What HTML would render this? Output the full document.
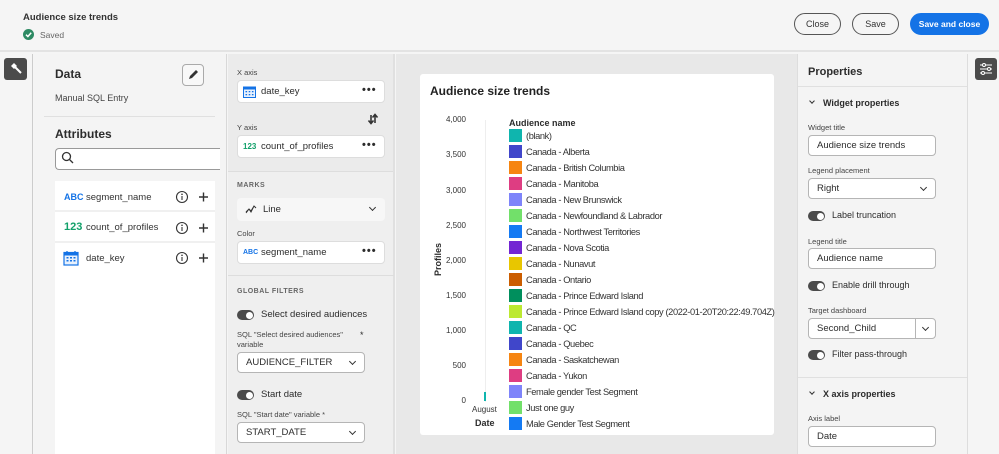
<!DOCTYPE html>
<html><head><meta charset="utf-8"><style>
*{box-sizing:border-box;margin:0;padding:0}
body{width:999px;height:454px;overflow:hidden;background:#f5f5f5;font-family:"Liberation Sans",sans-serif;color:#2c2c2c;position:relative;font-size:10px}
.a{position:absolute}
.inp{position:absolute;background:#fff;border:1px solid #b5b5b5;border-radius:4px;font-size:9.5px;padding-left:8px;display:flex;align-items:center}
.card{position:absolute;background:#fff;border:1px solid #ddd;border-radius:4px;display:flex;align-items:center;font-size:10px}
.lbl{position:absolute;font-size:7.5px;color:#444}
.tog{position:absolute;width:17px;height:10px;border-radius:5px;background:#4b4b4b}
.tog:after{content:"";position:absolute;right:1.5px;top:1.5px;width:7px;height:7px;border-radius:50%;background:#fff}
.chev{position:absolute;width:5px;height:5px;border-right:1.4px solid #333;border-bottom:1.4px solid #333;transform:rotate(45deg)}
.btn{position:absolute;height:22px;border-radius:11px;border:1.5px solid #555;font-size:9px;display:flex;align-items:center;justify-content:center;color:#333;background:#f5f5f5}
.leg{position:absolute;left:509px;font-size:9.3px;color:#333;white-space:nowrap;letter-spacing:-0.4px}
.leg i{display:inline-block;width:13px;height:13px;vertical-align:middle;margin-right:4px;margin-top:-2px}
.yt{position:absolute;right:533px;font-size:8px;color:#333;text-align:right}
.dots{position:absolute;font-weight:bold;font-size:11px;letter-spacing:1px}
</style></head><body>
<div class="a" style="left:0;top:0;width:999px;height:52px;background:#f5f5f5;border-bottom:2px solid #e3e3e3"></div>
<div class="a" style="left:23px;top:12px;font-size:9.5px;font-weight:bold;color:#333">Audience size trends</div>
<div class="a" style="left:23px;top:29px;width:11px;height:11px;border-radius:50%;background:#2d8a63"></div>
<svg class="a" style="left:23px;top:29px" width="11" height="11"><path d="M3 5.7L4.9 7.5L8.2 3.8" stroke="#fff" stroke-width="1.5" fill="none"/></svg>
<div class="a" style="left:40px;top:30px;font-size:8.5px;color:#666">Saved</div>
<div class="btn" style="left:794px;top:13px;width:47px">Close</div>
<div class="btn" style="left:852px;top:13px;width:47px">Save</div>
<div class="btn" style="left:910px;top:13px;width:79px;background:#1473e6;border-color:#1473e6;color:#fff;font-weight:bold;font-size:8.5px">Save and close</div>

<div class="a" style="left:0;top:54px;width:33px;height:400px;background:#f5f5f5;border-right:1px solid #ccc"></div>
<div class="a" style="left:4px;top:58px;width:23px;height:22px;background:#4b4b4b;border-radius:3px"></div>
<svg class="a" style="left:4px;top:58px" width="23" height="22"><path d="M7 8l3-3 3 3-3 3z" fill="#fff"/><path d="M11 9l6 6" stroke="#fff" stroke-width="2"/></svg>

<div class="a" style="left:34px;top:54px;width:193px;height:400px;background:#f4f4f4;border-right:1px solid #d8d8d8"></div>
<div class="a" style="left:55px;top:67px;font-size:12px;font-weight:bold">Data</div>
<div class="a" style="left:182px;top:64px;width:22px;height:22px;border:1px solid #aaa;border-radius:4px;background:#f8f8f8"></div>
<svg class="a" style="left:182px;top:64px" width="22" height="22"><path d="M7 15l1-3 6-6 2 2-6 6z" fill="#333"/></svg>
<div class="a" style="left:55px;top:93px;font-size:9px;color:#444">Manual SQL Entry</div>
<div class="a" style="left:44px;top:116px;width:171px;height:1px;background:#e0e0e0"></div>
<div class="a" style="left:55px;top:127px;font-size:12px;font-weight:bold">Attributes</div>
<div class="a" style="left:55px;top:148px;width:165px;height:22px;border:1px solid #999;border-right:none;border-radius:4px 0 0 4px;background:#fff"></div>
<svg class="a" style="left:61px;top:151px" width="14" height="14"><circle cx="5.5" cy="5.5" r="4" stroke="#333" stroke-width="1.3" fill="none"/><path d="M8.5 8.5l3.5 3.5" stroke="#333" stroke-width="1.3"/></svg>
<div class="a" style="left:55px;top:181px;width:160px;height:273px;background:#fff"></div>
<div class="a" style="left:55px;top:210px;width:160px;height:2px;background:#f0f0f0"></div>
<div class="a" style="left:55px;top:241px;width:160px;height:2px;background:#f0f0f0"></div>
<div class="a" style="left:64px;top:192px;font-size:9px;font-weight:bold;color:#1473e6">ABC</div>
<div class="a" style="left:86px;top:192px;font-size:9.5px;color:#333">segment_name</div>
<div class="a" style="left:64px;top:221px;font-size:11px;font-weight:bold;color:#12a06a">123</div>
<div class="a" style="left:86px;top:222px;font-size:9.5px;color:#333">count_of_profiles</div>
<svg class="a" style="left:63px;top:250px" width="16" height="16"><rect x="1" y="2.5" width="14" height="12.5" fill="#e8f1fd" stroke="#1473e6" stroke-width="1.2"/><rect x="1" y="2.5" width="14" height="3" fill="#1473e6"/><path d="M4 1v3M12 1v3" stroke="#1473e6" stroke-width="1.3"/><g fill="#1473e6"><rect x="3.5" y="7" width="2" height="1.5"/><rect x="7" y="7" width="2" height="1.5"/><rect x="10.5" y="7" width="2" height="1.5"/><rect x="3.5" y="10" width="2" height="1.5"/><rect x="7" y="10" width="2" height="1.5"/><rect x="10.5" y="10" width="2" height="1.5"/></g></svg>
<div class="a" style="left:86px;top:253px;font-size:9.5px;color:#333">date_key</div>
<svg class="a" style="left:174px;top:189px" width="40" height="80"><g stroke="#333" stroke-width="1.1" fill="none"><circle cx="8" cy="8" r="5.5"/><circle cx="8" cy="39" r="5.5"/><circle cx="8" cy="69" r="5.5"/><path d="M25 8h9M29.5 3.5v9M25 39h9M29.5 34.5v9M25 69h9M29.5 64.5v9" stroke-width="1.4"/><path d="M8 7v4M8 38v4M8 68v4"/></g><g fill="#333"><circle cx="8" cy="5.3" r=".8"/><circle cx="8" cy="36.3" r=".8"/><circle cx="8" cy="66.3" r=".8"/></g></svg>

<div class="a" style="left:228px;top:54px;width:167px;height:118px;background:#ebebeb;border-bottom:1px solid #ddd"></div>
<div class="a" style="left:228px;top:172px;width:167px;height:282px;background:#efefef"></div>
<div class="a" style="left:228px;top:54px;width:167px;height:400px;border-right:2px solid #e0e0e0"></div>
<div class="lbl" style="left:237px;top:68px">X axis</div>
<div class="card" style="left:237px;top:80px;width:148px;height:23px"></div>
<svg class="a" style="left:243px;top:85px" width="13" height="13"><rect x=".5" y="2" width="12" height="10.5" fill="#e8f1fd" stroke="#1473e6"/><rect x=".5" y="2" width="12" height="2.5" fill="#1473e6"/><g fill="#1473e6"><rect x="2.5" y="6" width="1.6" height="1.3"/><rect x="5.7" y="6" width="1.6" height="1.3"/><rect x="8.9" y="6" width="1.6" height="1.3"/><rect x="2.5" y="9" width="1.6" height="1.3"/><rect x="5.7" y="9" width="1.6" height="1.3"/><rect x="8.9" y="9" width="1.6" height="1.3"/></g></svg>
<div class="a" style="left:261px;top:86px;font-size:9.5px">date_key</div>
<div class="dots" style="left:362px;top:84px">•••</div>
<svg class="a" style="left:367px;top:112px" width="12" height="14"><path d="M4 3v8M1.5 8.5L4 11.5 6.5 8.5M8 11V3M5.5 5.5L8 2.5 10.5 5.5" stroke="#333" stroke-width="1.6" fill="none"/></svg>
<div class="lbl" style="left:237px;top:123px">Y axis</div>
<div class="card" style="left:237px;top:135px;width:148px;height:23px"></div>
<div class="a" style="left:243px;top:142px;font-size:8px;font-weight:bold;color:#12a06a">123</div>
<div class="a" style="left:261px;top:141px;font-size:9.5px">count_of_profiles</div>
<div class="dots" style="left:362px;top:139px">•••</div>
<div class="a" style="left:237px;top:182px;font-size:7px;font-weight:bold;color:#666;letter-spacing:.5px">MARKS</div>
<div class="a" style="left:237px;top:198px;width:148px;height:23px;background:#f7f7f7;border-radius:4px"></div>
<svg class="a" style="left:245px;top:204px" width="12" height="10"><path d="M1 9l3-4 2 2 3-5 2 2M1 8l3-3 2 3 3-6" stroke="#333" stroke-width="1" fill="none"/></svg>
<div class="a" style="left:263px;top:204px;font-size:9.5px">Line</div>
<div class="chev" style="left:370px;top:205px"></div>
<div class="lbl" style="left:237px;top:229px">Color</div>
<div class="card" style="left:237px;top:241px;width:148px;height:23px"></div>
<div class="a" style="left:243px;top:249px;font-size:7px;font-weight:bold;color:#1473e6">ABC</div>
<div class="a" style="left:261px;top:247px;font-size:9.5px">segment_name</div>
<div class="dots" style="left:362px;top:245px">•••</div>
<div class="a" style="left:228px;top:275px;width:166px;height:1px;background:#ddd"></div>
<div class="a" style="left:237px;top:288px;font-size:7px;font-weight:bold;color:#666;letter-spacing:.5px">GLOBAL FILTERS</div>
<div class="tog" style="left:237px;top:310px"></div>
<div class="a" style="left:261px;top:309px;font-size:9.5px">Select desired audiences</div>
<div class="lbl" style="left:237px;top:330px;line-height:10px">SQL "Select desired audiences"<br>variable</div>
<div class="a" style="left:360px;top:330px;font-size:9px">*</div>
<div class="inp" style="left:237px;top:352px;width:128px;height:21px">AUDIENCE_FILTER</div>
<div class="chev" style="left:350px;top:359px"></div>
<div class="tog" style="left:237px;top:390px"></div>
<div class="a" style="left:261px;top:389px;font-size:9.5px">Start date</div>
<div class="lbl" style="left:237px;top:410px">SQL "Start date" variable *</div>
<div class="inp" style="left:237px;top:422px;width:128px;height:21px">START_DATE</div>
<div class="chev" style="left:350px;top:429px"></div>

<div class="a" style="left:396px;top:54px;width:401px;height:400px;background:#e8e8e8"></div>
<div class="a" style="left:420px;top:74px;width:354px;height:361px;background:#fff;border-radius:3px"></div>
<div class="a" style="left:430px;top:84px;font-size:12px;font-weight:bold;color:#222">Audience size trends</div>
<div class="yt" style="top:115px">4,000</div>
<div class="yt" style="top:150px">3,500</div>
<div class="yt" style="top:186px">3,000</div>
<div class="yt" style="top:221px">2,500</div>
<div class="yt" style="top:256px">2,000</div>
<div class="yt" style="top:291px">1,500</div>
<div class="yt" style="top:326px">1,000</div>
<div class="yt" style="top:361px">500</div>
<div class="yt" style="top:396px">0</div>
<div class="a" style="left:485px;top:120px;width:1px;height:282px;background:#eee"></div>
<div class="a" style="left:484px;top:392px;width:1.5px;height:9px;background:#0fb5ae"></div>
<div class="a" style="left:433px;top:276px;transform:rotate(-90deg);transform-origin:left top;font-size:9px;font-weight:bold">Profiles</div>
<div class="a" style="left:472px;top:405px;font-size:8px;color:#333">August</div>
<div class="a" style="left:475px;top:418px;font-size:9px;font-weight:bold">Date</div>
<div class="a" style="left:509px;top:118px;font-size:9px;font-weight:bold">Audience name</div>
<div class="leg" style="top:131px"><i style="background:#0fb5ae"></i>(blank)</div>
<div class="leg" style="top:147px"><i style="background:#4046ca"></i>Canada - Alberta</div>
<div class="leg" style="top:163px"><i style="background:#f68511"></i>Canada - British Columbia</div>
<div class="leg" style="top:179px"><i style="background:#de3d82"></i>Canada - Manitoba</div>
<div class="leg" style="top:195px"><i style="background:#7e84fa"></i>Canada - New Brunswick</div>
<div class="leg" style="top:211px"><i style="background:#72e06a"></i>Canada - Newfoundland &amp; Labrador</div>
<div class="leg" style="top:227px"><i style="background:#147af3"></i>Canada - Northwest Territories</div>
<div class="leg" style="top:243px"><i style="background:#7326d3"></i>Canada - Nova Scotia</div>
<div class="leg" style="top:259px"><i style="background:#e8c600"></i>Canada - Nunavut</div>
<div class="leg" style="top:275px"><i style="background:#cb5d00"></i>Canada - Ontario</div>
<div class="leg" style="top:291px"><i style="background:#008f5d"></i>Canada - Prince Edward Island</div>
<div class="leg" style="top:307px"><i style="background:#bce931"></i>Canada - Prince Edward Island copy (2022-01-20T20:22:49.704Z)</div>
<div class="leg" style="top:323px"><i style="background:#0fb5ae"></i>Canada - QC</div>
<div class="leg" style="top:339px"><i style="background:#4046ca"></i>Canada - Quebec</div>
<div class="leg" style="top:355px"><i style="background:#f68511"></i>Canada - Saskatchewan</div>
<div class="leg" style="top:371px"><i style="background:#de3d82"></i>Canada - Yukon</div>
<div class="leg" style="top:387px"><i style="background:#7e84fa"></i>Female gender Test Segment</div>
<div class="leg" style="top:403px"><i style="background:#72e06a"></i>Just one guy</div>
<div class="leg" style="top:419px"><i style="background:#147af3"></i>Male Gender Test Segment</div>

<div class="a" style="left:797px;top:54px;width:171px;height:400px;background:#f4f4f4;border-left:1px solid #ddd;border-right:1px solid #ddd"></div>
<div class="a" style="left:808px;top:66px;font-size:11px;font-weight:bold">Properties</div>
<div class="a" style="left:798px;top:86px;width:169px;height:1px;background:#e0e0e0"></div>
<div class="chev" style="left:810px;top:99px;width:4px;height:4px"></div>
<div class="a" style="left:823px;top:98px;font-size:9px;font-weight:bold">Widget properties</div>
<div class="lbl" style="left:808px;top:123px">Widget title</div>
<div class="inp" style="left:808px;top:135px;width:128px;height:21px">Audience size trends</div>
<div class="lbl" style="left:808px;top:166px">Legend placement</div>
<div class="inp" style="left:808px;top:178px;width:128px;height:21px">Right</div>
<div class="chev" style="left:921px;top:185px"></div>
<div class="tog" style="left:808px;top:211px"></div>
<div class="a" style="left:832px;top:210px;font-size:9px">Label truncation</div>
<div class="lbl" style="left:808px;top:237px">Legend title</div>
<div class="inp" style="left:808px;top:248px;width:128px;height:21px">Audience name</div>
<div class="tog" style="left:808px;top:281px"></div>
<div class="a" style="left:832px;top:280px;font-size:9px">Enable drill through</div>
<div class="lbl" style="left:808px;top:306px">Target dashboard</div>
<div class="inp" style="left:808px;top:318px;width:128px;height:21px">Second_Child</div>
<div class="a" style="left:915px;top:318px;width:1px;height:21px;background:#b5b5b5"></div>
<div class="chev" style="left:923px;top:325px"></div>
<div class="tog" style="left:808px;top:350px"></div>
<div class="a" style="left:832px;top:349px;font-size:9px">Filter pass-through</div>
<div class="a" style="left:798px;top:377px;width:169px;height:1px;background:#e0e0e0"></div>
<div class="chev" style="left:810px;top:390px;width:4px;height:4px"></div>
<div class="a" style="left:823px;top:389px;font-size:9px;font-weight:bold">X axis properties</div>
<div class="lbl" style="left:808px;top:414px">Axis label</div>
<div class="inp" style="left:808px;top:426px;width:128px;height:21px">Date</div>

<div class="a" style="left:968px;top:54px;width:31px;height:400px;background:#f5f5f5"></div>
<div class="a" style="left:975px;top:58px;width:22px;height:22px;background:#4b4b4b;border-radius:3px"></div>
<svg class="a" style="left:975px;top:58px" width="22" height="22"><g stroke="#fff" stroke-width="1" fill="none"><path d="M5 7h12M5 11h12M5 15h12"/><circle cx="9" cy="7" r="1.5" fill="#4b4b4b"/><circle cx="14" cy="11" r="1.5" fill="#4b4b4b"/><circle cx="8" cy="15" r="1.5" fill="#4b4b4b"/></g></svg>
</body></html>
